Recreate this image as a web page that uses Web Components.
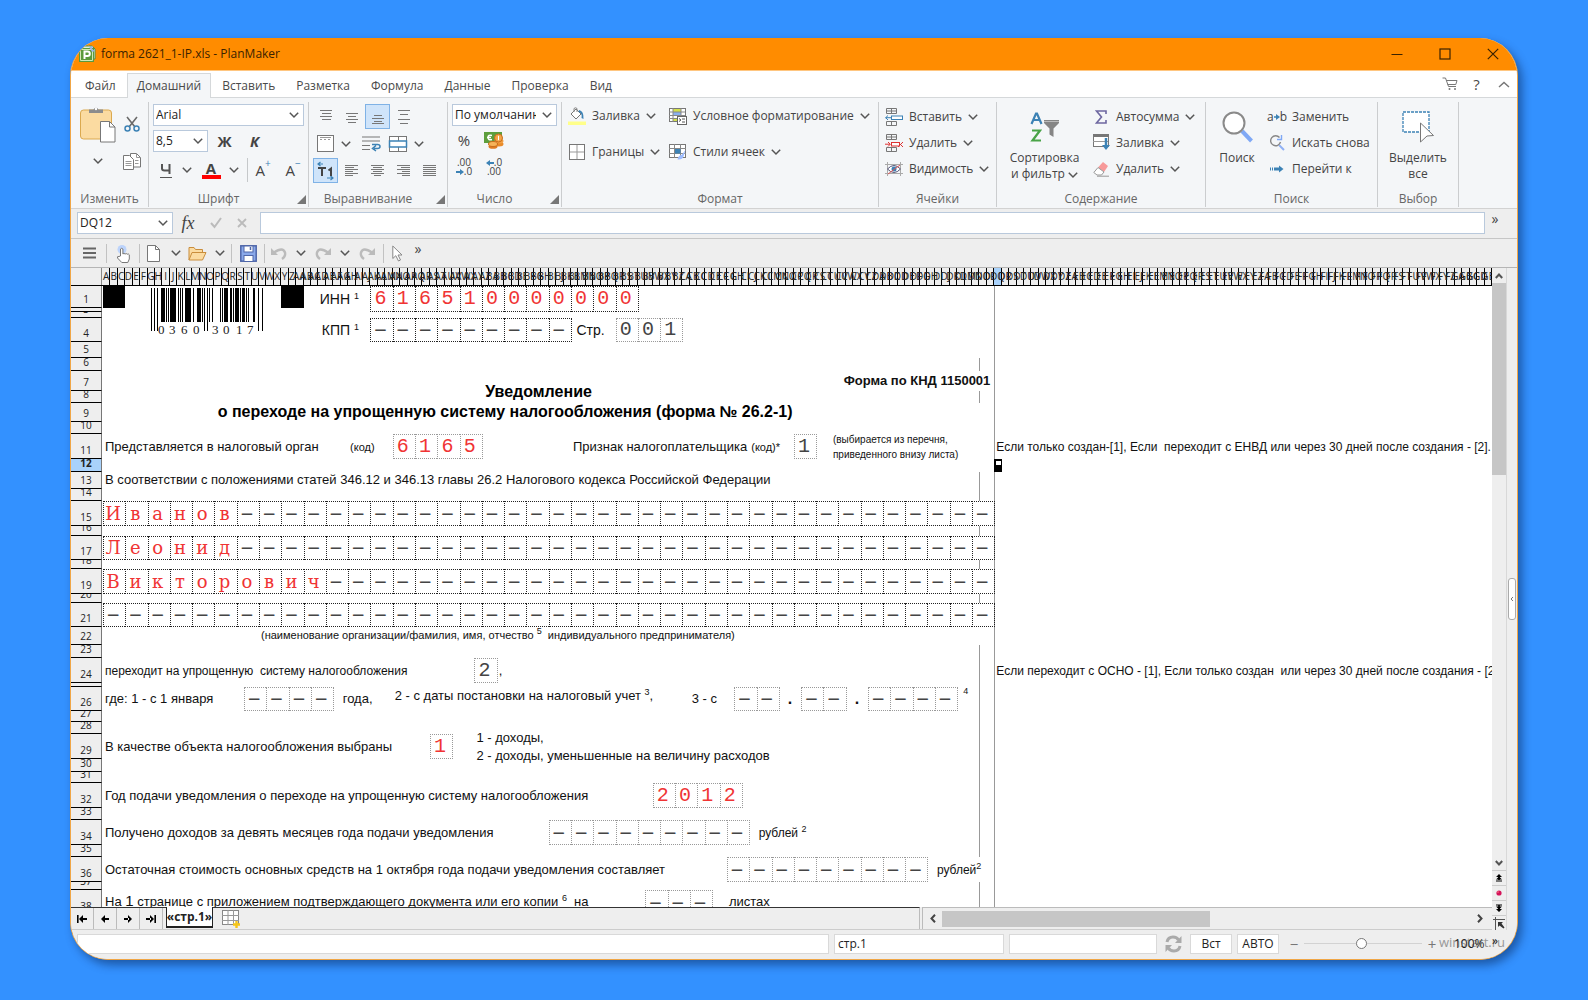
<!DOCTYPE html>
<html lang="ru">
<head>
<meta charset="utf-8">
<title>forma 2621_1-IP.xls - PlanMaker</title>
<style>
  html, body { margin: 0; height: 100%; }
  *, *::before { box-sizing: border-box; }
  body { background: #3391ff; font: 12px/16px "Open Sans", "Noto Sans", sans-serif; color: #444; padding: 38px 70px 40px; overflow: hidden; }
</style>
</head>
<body>
<app-window>
  <title-bar>forma 2621_1-IP.xls - PlanMaker</title-bar>
  <menu-tabs></menu-tabs>
  <ribbon-bar></ribbon-bar>
  <formula-bar></formula-bar>
  <quick-bar></quick-bar>
  <sheet-area></sheet-area>
  <status-bar></status-bar>
</app-window>
<script>
const BASE = `
  *{box-sizing:border-box}
  :host{display:block}
  button,select,input{font:inherit;color:inherit;margin:0;border-radius:0}
  button{border:0;background:none;padding:0;display:flex;align-items:center;justify-content:center;white-space:nowrap}
`;
function define(tag, css, html) {
  customElements.define(tag, class extends HTMLElement {
    constructor() {
      super();
      this.attachShadow({ mode: 'open' });
    }
    connectedCallback() {
      const body = typeof html === 'function' ? html(this) : html;
      this.shadowRoot.innerHTML = `<style>${BASE}${css}</style>${body}`;
    }
  });
}

/* ---------- icons: [width, height, markup] ---------- */
const hl = (list, c = '#777') => list.map(([x, y, w]) => `<path d="M${x} ${y}.5h${w}" stroke="${c}"/>`).join('');
const ICONS = {
  chev: [10, 6, '<path d="M.8 .8L5 5 9.200.8" fill="none" stroke="#555" stroke-width="1.500"/>'],
  app: [17, 18, '<path d="M3 1h10l3 3v10H3z" fill="#dfeee0" stroke="#4b8f4b"/><rect x="0" y="3" width="15" height="14" fill="#5a9a3c"/><path d="M1.500 4.500h12v11h-12z" fill="none" stroke="#cfe8b8"/><path d="M5.500 14V6.500h3a2.300 2.300 0 010 4.600h-3" fill="none" stroke="#fff" stroke-width="2"/><path d="M9 0l2 2 3-1-1 3 3 2-3 1" fill="#9db4e6"/>'],
  min: [12, 12, '<path d="M.5 6.500h11" stroke="#3a2200" stroke-width="1.200"/>'],
  max: [12, 12, '<rect x="1" y="1" width="10" height="10" fill="none" stroke="#3a2200" stroke-width="1.200"/>'],
  close: [12, 12, '<path d="M.8.8l10.400 10.400M11.200.8L.8 11.200" stroke="#3a2200" stroke-width="1.200"/>'],
  cart: [16, 14, '<path d="M.5 1h3l3 8.500h7.500M4.200 3.500h10.800l-1.200 4H5.600" fill="none" stroke="#777"/><circle cx="7.500" cy="12" r="1" fill="#777"/><circle cx="13" cy="12" r="1" fill="#777"/>'],
  up: [12, 7, '<path d="M1 6l5-4.600L11 6" fill="none" stroke="#777" stroke-width="1.400"/>'],
  paste: [36, 38, '<rect x=".5" y="5" width="31" height="29" rx="3" fill="#fbdba1" stroke="#dba94f"/><path d="M9 8V4.500h4.500a2.700 2.700 0 015 0H23V8z" fill="#8c8c8c"/><circle cx="16" cy="4" r="1.200" fill="#fff"/><path d="M20.500 16.500h9l5.500 5.500v15H20.500z" fill="#fff" stroke="#777"/><path d="M29.500 16.500V22H35" fill="none" stroke="#777"/>'],
  cut: [16, 16, '<path d="M3 1l8 10M13 1L5 11" stroke="#6a6a6a" stroke-width="1.600"/><circle cx="3.500" cy="12.500" r="2.500" fill="none" stroke="#3c82b5" stroke-width="1.500"/><circle cx="12.500" cy="12.500" r="2.500" fill="none" stroke="#3c82b5" stroke-width="1.500"/>'],
  copy: [18, 17, '<path d="M7.500.5h6l4 4v9.500h-10z" fill="#fff" stroke="#777"/><path d="M.5 2.500h6l4 4v10H.5z" fill="#fff" stroke="#777"/><path d="M2.500 8.500h6m-6 2h6m-6 2h6M13.500 1v3.500h3.500m-5 3h3.500m-3.500 3h3.500" stroke="#999" fill="none"/>'],
  under: [14, 17, '<path d="M3 2v4.500q0 2 2.500 2H10M10.500 2v10" fill="none" stroke="#555" stroke-width="2"/><path d="M1 15.500h12" stroke="#555"/>'],
  vtop: [14, 14, hl([[1, 0, 12], [3, 3, 9], [1, 6, 12], [3, 9, 9]])],
  vmid: [14, 14, hl([[1, 3, 12], [3, 6, 8], [1, 9, 12], [3, 12, 8]])],
  vbot: [14, 14, hl([[3, 5, 8], [1, 8, 12], [3, 11, 8], [1, 13, 12]])],
  vjust: [14, 14, hl([[1, 0, 12], [3, 4, 8], [1, 9, 12], [3, 13, 8]])],
  frame: [17, 17, '<rect x=".5" y=".5" width="16" height="16" fill="#fff" stroke="#777"/><path d="M3 2.500h11M3 4.500h2m2 0h2m2 0h2" stroke="#999"/>'],
  wrap: [19, 15, '<path d="M0 1h18M0 5h18M0 9.500h8M0 13.500h8" stroke="#777" stroke-width="1.200"/><path d="M12 12.500h3.500q2.500 0 2.500-2t-2.500-2H10M14 9.500l-3.500 3 3.500 2.500" fill="none" stroke="#3c82b5" stroke-width="1.500"/>'],
  merge: [18, 16, '<rect x=".5" y=".5" width="17" height="15" fill="#fff" stroke="#777"/><path d="M9.500 0v16" stroke="#777"/><rect x=".5" y="5" width="17" height="6" fill="#fff" stroke="#3c82b5" stroke-width="1.500"/>'],
  hleft: [14, 13, hl([[0, 1, 13], [0, 3, 9], [0, 5, 13], [0, 7, 8], [0, 9, 13], [0, 11, 8]])],
  hcent: [14, 13, hl([[0, 1, 13], [2, 3, 9], [0, 5, 13], [2, 7, 9], [0, 9, 13], [3, 11, 7]])],
  hright: [14, 13, hl([[0, 1, 13], [4, 3, 9], [0, 5, 13], [5, 7, 8], [0, 9, 13], [5, 11, 8]])],
  hjust: [14, 13, hl([[0, 1, 13], [0, 3, 13], [0, 5, 13], [0, 7, 13], [0, 9, 13], [0, 11, 13]])],
  t1: [18, 18, '<path d="M6 2H1M3.500 0L1 2l2.500 2M10 16h6M13.500 14l2.500 2-2.500 2" fill="none" stroke="#3c82b5" stroke-width="1.200"/><path d="M1 6h8M5 6v8M11.500 8.500L14 6.500V14" fill="none" stroke="#444" stroke-width="2"/>'],
  money: [20, 17, '<rect x="0" y="0" width="18" height="11" fill="#5d9e3d"/><path d="M8 3.500q-4-1-4 2t4 2M3 5.500h4" fill="none" stroke="#fff" stroke-width="1.400"/><ellipse cx="15" cy="12" rx="4.500" ry="2.500" fill="#e98b2a"/><ellipse cx="15" cy="9" rx="4.500" ry="2.500" fill="#f2a043"/><circle cx="14.500" cy="6" r="4" fill="#f4a548" stroke="#c96d1c"/><ellipse cx="9" cy="14.500" rx="4.500" ry="2.300" fill="#e07c22"/><ellipse cx="9" cy="12" rx="4.500" ry="2.500" fill="#f6b35a" stroke="#c96d1c"/><path d="M14.500 3.800v4.400" stroke="#fff"/>'],
  fill: [18, 18, '<path d="M3 7l5-5 5 5-5 5z" fill="#fff" stroke="#777"/><path d="M6 5V1.500q1.500-1.500 3 0V5" fill="none" stroke="#888"/><path d="M11 3q5 1 4.500 9l-2-1q1-5-3-6z" fill="#3c82b5"/><rect y="14.500" width="18" height="3.500" fill="#ffff8a"/>'],
  grid: [16, 16, '<rect x=".5" y=".5" width="15" height="15" fill="#fff" stroke="#777"/><path d="M8 1v14M1 8h14" stroke="#999"/>'],
  cond: [18, 17, '<rect x=".5" y=".5" width="16" height="13" fill="#fff" stroke="#777"/><rect x="4" y="1" width="8" height="3" fill="#d3e04b"/><rect x="4" y="4" width="8" height="3" fill="#8bb0f0"/><rect x="4" y="10" width="6" height="3" fill="#d3e04b"/><path d="M4 0v14M12 0v14M0 4h16M0 7.500h16M0 10.500h16" stroke="#888"/><rect x="8.500" y="8.500" width="9" height="8" fill="#fff" stroke="#666"/><path d="M10 10.500l2 1.500-2 1.500M13 11h3m-3 3h3" fill="none" stroke="#555"/>'],
  styles: [18, 16, '<rect x=".5" y=".5" width="16" height="13" fill="#fff" stroke="#777"/><path d="M5.500 0v14M11.500 0v14M0 4.500h17M0 9.500h17" stroke="#888"/><rect x="6" y="5" width="5.500" height="4.500" fill="#3c82b5"/><path d="M16.500 6l-4 5q-3 0-4 4.500 5 .5 6-3z" fill="#9dbcff"/>'],
  ins: [18, 18, '<path d="M1.500.5h10v5h-10zM1.500 3h10M6.500 0v6M1.500 13.500h10v4h-10zM6.500 13v4" fill="none" stroke="#777"/><rect x="6.500" y="8" width="11" height="3.500" fill="#fff" stroke="#3c82b5"/><path d="M6 9.700H.5M3 7.500L.7 9.700 3 12" fill="none" stroke="#3c82b5"/>'],
  del: [19, 18, '<path d="M1.500.5h10v5h-10zM1.500 3h10M6.500 0v6M1.500 13.500h10v4h-10zM6.500 13v4" fill="none" stroke="#777"/><rect x="6.500" y="8.500" width="8" height="3.500" fill="#fff" stroke="#d33"/><path d="M0 10.200h5M3 8l2.300 2.200L3 12.500M13 8l5 5m0-5l-5 5" fill="none" stroke="#d33"/>'],
  eye: [18, 14, '<path d="M2.500 0v14M15.500 0v14M0 2.500h18M0 11.500h18" stroke="#aaa"/><path d="M2.500 7q6.500-7 13 0-6.500 7-13 0z" fill="#fff" stroke="#557"/><circle cx="9" cy="7" r="2.500" fill="#3c82b5"/><path d="M3 12L15 3" stroke="#d55"/>'],
  funnel: [30, 30, '<path d="M1.500 12L6 1.500h1L11.500 12M3 8h7" fill="none" stroke="#3c82b5" stroke-width="2.200"/><path d="M2 18.500h8L2.500 28.500H11" fill="none" stroke="#49a347" stroke-width="2.200"/><path d="M14 8h15v3l-5.500 5.500V25l-4-2.500v-6L14 11z" fill="#858585"/><path d="M14 9.500h15" stroke="#bbb"/>'],
  sum: [12, 14, '<path d="M11 4V1H1.500l5 6-5 6H11v-3" fill="none" stroke="#6d67a0" stroke-width="1.600"/>'],
  filld: [17, 17, '<rect x=".5" y=".5" width="15" height="12" fill="#fff" stroke="#777"/><path d="M0 2h16" stroke="#777" stroke-width="2"/><path d="M0 7.500h15" stroke="#999"/><path d="M13 4v8" stroke="#3c82b5" stroke-width="2.500"/><path d="M9 11h8l-4 5z" fill="#3c82b5"/>'],
  erase: [16, 16, '<path d="M10 1l5 4-4 6-6-4.500z" fill="#f79a9a"/><path d="M5 6.500l6 4.500-2.500 3H4L.8 11.500z" fill="#fff" stroke="#999"/><path d="M4 15.200h12" stroke="#999"/>'],
  search: [31, 33, '<path d="M20 20l9.500 10" stroke="#7fa8f5" stroke-width="4"/><circle cx="12" cy="12" r="10.500" fill="#fff" stroke="#8a8a8a" stroke-width="2"/>'],
  again: [16, 16, '<path d="M10 10l5 5" stroke="#8fb0f5" stroke-width="2"/><path d="M11.500 7a5 5 0 11-1-4.500" fill="none" stroke="#888" stroke-width="1.400"/><path d="M8 4.500h4.500V0" fill="none" stroke="#7fa8f5" stroke-width="1.400"/>'],
  goto: [14, 8, '<path d="M.5 2.500v3M2.500 2.500v3" stroke="#3c82b5"/><path d="M4 4h6" stroke="#3c82b5" stroke-width="3"/><path d="M9 .5L13.500 4 9 7.500z" fill="#3c82b5"/>'],
  repl: [6, 8, '<path d="M0 4h4" stroke="#3c82b5" stroke-width="1.500"/><path d="M2 1l4 3-4 3z" fill="#3c82b5"/>'],
  pick: [32, 32, '<rect x="1" y="1" width="26" height="20" fill="#fff" stroke="#3c82b5" stroke-dasharray="3 1" stroke-width="1.300"/><path d="M18.500 12l13 12.500-6.500.5-6.500 6z" fill="#fff" stroke="#777"/>'],
  right: [8, 6, '<path d="M0 3h5" stroke="#3c82b5" stroke-width="2"/><path d="M4 0l4 3-4 3z" fill="#3c82b5"/>'],
  left: [8, 6, '<path d="M3 3h5" stroke="#3c82b5" stroke-width="2"/><path d="M4 0L0 3l4 3z" fill="#3c82b5"/>'],
  corner: [9, 9, '<path d="M9 0v9H0z" fill="#777"/>'],
  check: [12, 11, '<path d="M1 6l3.500 4L11 1" fill="none" stroke="#bbb" stroke-width="2"/>'],
  cross: [10, 10, '<path d="M1 1l8 8M9 1L1 9" stroke="#bbb" stroke-width="1.800"/>'],
  burger: [14, 12, '<path d="M0 1.500h13M0 6h13M0 10.500h13" stroke="#666" stroke-width="2"/>'],
  hand: [16, 19, '<circle cx="7" cy="5.500" r="4.500" fill="#bcd3fb"/><path d="M5.500 12V5q1.200-1.400 2.400 0v5q1-1.200 2.200 0 1.200-1 2.200.2 1.400-.6 2 .6v4.200l-1.500 3.500h-6L2.500 14q-.5-2 1.500-1.500z" fill="#fff" stroke="#777"/>'],
  page: [13, 17, '<path d="M.5.5h8l4 4v12H.5z" fill="#fff" stroke="#777"/><path d="M8.500.5v4h4" fill="none" stroke="#777"/>'],
  folder: [19, 15, '<path d="M1 14V1.500h5l1.500 2h7V6" fill="#fbdba1" stroke="#c98d3c"/><path d="M4 6.500h14L14.500 14H1z" fill="#fbdba1" stroke="#c98d3c"/>'],
  save: [17, 17, '<rect x=".8" y=".8" width="15.400" height="15.400" fill="#8aa9ea" stroke="#4f66a8" stroke-width="1.500"/><rect x="4" y="1" width="9" height="6" fill="#fff" stroke="#4f66a8"/><rect x="4" y="10.500" width="9" height="6" fill="#fff" stroke="#4f66a8"/><path d="M10.500 2v3" stroke="#4f66a8" stroke-width="1.500"/>'],
  undo: [16, 13, '<path d="M3 5.500q9-6 11 0 .8 4-3 6.500" fill="none" stroke="#bbb" stroke-width="2.400"/><path d="M0 1v7h7z" fill="#bbb"/>'],
  redo: [16, 13, '<path d="M13 5.500q-9-6-11 0-.8 4 3 6.500" fill="none" stroke="#bbb" stroke-width="2.400"/><path d="M16 1v7H9z" fill="#bbb"/>'],
  arrow: [11, 17, '<path d="M.8 1v12.500l3-2.800L6.500 16l2-1-2.500-5h4z" fill="#fff" stroke="#888"/>'],
  vup: [8, 6, '<path d="M.8 5L4 1.500 7.200 5" fill="none" stroke="#555" stroke-width="2"/>'],
  vdn: [8, 6, '<path d="M.8 1L4 4.500 7.200 1" fill="none" stroke="#555" stroke-width="2"/>'],
  vlt: [6, 9, '<path d="M5 .8L1.500 4.500 5 8.200" fill="none" stroke="#444" stroke-width="2"/>'],
  vrt: [6, 9, '<path d="M1 .8L4.500 4.500 1 8.200" fill="none" stroke="#444" stroke-width="2"/>'],
  side: [4, 6, '<path d="M3 1L1 3l2 2" fill="none" stroke="#777"/>'],
  dup: [6, 8, '<path d="M3 0l3 3H0zM0 6.500h6v1H0zM2.200 2h1.600v4H2.200z"/><path d="M3 2.500l3 3H0z"/>'],
  ddn: [6, 8, '<path d="M3 8L0 5h6zM0 .5h6v1H0zM2.200 1h1.600v5H2.200z"/><path d="M3 5.500l-3-3h6z"/>'],
  dot: [6, 6, '<circle cx="3" cy="3" r="2.600" fill="#d4145a"/><circle cx="2" cy="2" r="1" fill="#e57"/>'],
  cornr: [13, 13, '<path d="M2.500 0v13M0 2.500h12" stroke="#555"/><path d="M5 5h5L8.500 6.500l3 4-1 1-4-3L5 10z" fill="#333"/>'],
  nfirst: [10, 8, '<path d="M.8 0v8" stroke="#000" stroke-width="1.600"/><path d="M2 4l4-4v8zM5 3h5v2H5z"/>'],
  nprev: [8, 8, '<path d="M0 4l4-4v8zM3 3h5v2H3z"/>'],
  nnext: [8, 8, '<path d="M8 4L4 0v8zM0 3h5v2H0z"/>'],
  nlast: [10, 8, '<path d="M9.200 0v8" stroke="#000" stroke-width="1.600"/><path d="M8 4L4 0v8zM0 3h5v2H0z"/>'],
  newsh: [18, 18, '<rect x=".5" y=".5" width="16" height="14" fill="#fff" stroke="#888"/><path d="M6 0v15M11.500 0v15M0 5.500h17M0 10.500h17" stroke="#999"/><path d="M14.500 11v7M11 14.500h7" stroke="#f5c518" stroke-width="2.400"/>'],
  sync: [17, 18, '<path d="M2 7q1-5 6-5 4 0 5.500 3M15 11q-1 5-6 5-4 0-5.500-3" fill="none" stroke="#aaa" stroke-width="3"/><path d="M16.500 1v7H10zM.5 17v-7H7z" fill="#aaa"/>'],
  barcode: [114, 44, (() => {
    const inner = [[10, 4], [15, 1], [17, 1], [19, 6], [27, 1], [29, 1], [31, 1], [34, 6], [42, 1], [46, 4], [51, 1], [58, 1], [61, 1], [69, 1], [71, 1], [73, 4], [79, 2], [82, 1], [84, 4], [89, 1], [91, 3], [95, 1], [97, 1], [102, 2]];
    const guard = [[0, 1], [3, 1], [6, 1], [53, 1], [56, 1], [107, 1], [111, 1]];
    return inner.map(([x, w]) => `<rect x="${x}" y="0" width="${w}" height="34"/>`).join('') +
      guard.map(([x, w]) => `<rect x="${x}" y="0" width="${w}" height="43"/>`).join('') +
      '<text x="7 18 30 42 61 72 85 96" y="46" font-family="Liberation Serif, serif" font-size="13" fill="#222">03603017</text>';
  })()],
};
define('ui-icon', ':host{display:inline-flex;flex:none}svg{display:block;overflow:visible}', el => {
  const [w, h, m] = ICONS[el.getAttribute('name')];
  return `<svg width="${w}" height="${h}" viewBox="0 0 ${w} ${h}" aria-hidden="true">${m}</svg>`;
});
const ic = n => `<ui-icon name="${n}"></ui-icon>`;

/* ---------- window frame ---------- */
define('app-window', `
  :host{display:flex;flex-direction:column;height:100%;background:#eee;border:1px solid #f0a646;border-top:0;border-radius:38px;overflow:hidden;box-shadow:4px 5px 10px rgba(0,20,60,.45);position:relative}
  ::slotted(sheet-area){flex:1;min-height:0}
`, '<slot></slot>');

define('title-bar', `
  :host{display:flex;align-items:center;height:33px;flex:none;background:#ff8c00;border-bottom:1px solid #ffc680;color:#3a2200;padding-left:8px}
  .t{flex:1;padding-left:5px} button{width:48px;height:32px}
`, `${ic('app')}<span class="t"><slot></slot></span>
  <button aria-label="Свернуть">${ic('min')}</button><button aria-label="Развернуть">${ic('max')}</button><button aria-label="Закрыть">${ic('close')}</button>`);

define('menu-tabs', `
  :host{display:flex;height:27px;flex:none;background:#fff;border-bottom:1px solid #d5d8da;padding-left:4px;color:#4a4a4a}
  nav{display:flex;flex:1;padding-top:2px;gap:1px}
  nav button{padding:0 10px;height:25px}
  nav button.on{background:#f4f6f8;border:1px solid #d5d8da;border-bottom:0;padding:0 9px}
  .r{display:flex;align-items:center} .r button{width:27px;height:26px;font-size:15px}
`, `<nav>${['Файл', 'Домашний', 'Вставить', 'Разметка', 'Формула', 'Данные', 'Проверка', 'Вид'].map(t => `<button${t === 'Домашний' ? ' class="on"' : ''}>${t}</button>`).join('')}</nav>
  <div class="r"><button aria-label="Магазин">${ic('cart')}</button><button aria-label="Справка">?</button><button aria-label="Свернуть ленту">${ic('up')}</button></div>`);

/* ---------- ribbon parts ---------- */
define('ribbon-group', `
  :host{display:flex;flex-direction:column;border-right:1px solid #cbcdcf;margin:4px 0 1px;flex:none}
  .c{flex:1;padding:2px 4px 0 4px}
  footer{display:grid;height:16px;align-items:center;justify-items:center;color:#666}
  footer>*{grid-area:1/1} footer.x span{padding-right:20px}
  ui-icon{justify-self:end;padding-right:2px;align-self:end;padding-bottom:3px}
`, el => {
  const x = el.hasAttribute('launcher');
  return `<div class="c"><slot></slot></div><footer${x ? ' class="x"' : ''}><span>${el.getAttribute('label')}</span>${x ? ic('corner') : ''}</footer>`;
});

define('drop-button', `
  :host{display:flex}
  button{height:100%} .i{width:22px;display:flex;align-items:center;justify-content:center;margin-right:4px;color:#444}
  .v{margin-left:6px;display:flex} .v:empty{display:none}
`, el => `<button><span class="i">${el.getAttribute('icon') === 'repl' ? '<span>a</span>' + ic('repl') + '<span>b</span>' : ic(el.getAttribute('icon'))}</span><slot></slot><span class="v">${el.hasAttribute('plain') ? '' : ic('chev')}</span></button>`);

define('big-button', `
  button{flex-direction:column;width:100%;justify-content:flex-start;line-height:16px}
  .i{height:46px;display:flex;align-items:center} .l{text-align:center;white-space:pre-line}
`, el => `<button><span class="i">${ic(el.getAttribute('icon'))}</span><span class="l"><slot></slot></span></button>`);

define('combo-box', `
  :host{display:grid;background:#fff;border:1px solid #b9c9dc;align-items:center;color:#222}
  select{grid-area:1/1;appearance:none;border:0;background:none;width:100%;height:100%;padding:0 20px 0 2px;outline:0;text-overflow:clip;overflow:hidden}
  ui-icon{grid-area:1/1;justify-self:end;padding-right:4px;pointer-events:none}
`, el => `<select aria-label="${el.getAttribute('label')}"><option>${el.getAttribute('value')}</option></select>${ic('chev')}`);

define('ribbon-bar', `
  :host{display:flex;height:111px;flex:none;background:#f4f6f8;border-bottom:1px solid #d2d2d2}
  .edit{display:grid;grid-template-columns:46px 22px;grid-template-rows:40px 34px;align-items:center;justify-items:center}
  .font{display:grid;grid-template-rows:22px 22px 28px;gap:4px}
  .row{display:grid;align-items:stretch}
  .f2{grid-template-columns:55px 33px 27px}
  .f3{grid-template-columns:26px 16px 32px 14px 12px 20px 30px}
  .f3 i{width:1px;background:#c5c8ca;justify-self:center;margin:2px 0}
  .f3 button:last-child{justify-self:end;width:20px}
  b{font-size:15px} .it{font-style:italic}
  .color{flex-direction:column} .color b{line-height:14px} .color i{display:block;width:19px;height:4px;margin:0;background:#f00}
  sup{font-size:10px;line-height:8px;color:#3c82b5;align-self:flex-start;padding-top:3px} .sz{font-size:15px}
  .al{display:grid;grid-template-rows:25px 25px 25px;row-gap:2px}
  .a5{grid-template-columns:repeat(5,25px);column-gap:1px}
  .am{grid-template-columns:25px 16px 34px 20px 22px}
  .on{background:#cfe4fa;border:1px solid #7fb2e6}
  .num{display:grid;grid-template-rows:22px 24px 25px;row-gap:2px}
  .n2{grid-template-columns:24px 36px}
  .dec{flex-direction:column;font-size:10px;line-height:9px;align-items:center}
  .fmt{display:grid;grid-template-columns:101px auto;grid-auto-rows:24px;row-gap:12px;justify-content:start}
  .list{display:grid;grid-auto-rows:25px;row-gap:1px}
  .two{display:flex;gap:2px}
`, `
  <ribbon-group label="Изменить" style="width:78px"><div class="edit"><button aria-label="Вставить">${ic('paste')}</button><button aria-label="Вырезать">${ic('cut')}</button><button aria-label="Параметры вставки">${ic('chev')}</button><button aria-label="Копировать">${ic('copy')}</button></div></ribbon-group>
  <ribbon-group label="Шрифт" launcher style="width:160px"><div class="font">
    <combo-box label="Шрифт" value="Arial"></combo-box>
    <div class="row f2"><combo-box label="Размер" value="8,5"></combo-box><button><b>Ж</b></button><button><b class="it">К</b></button></div>
    <div class="row f3"><button aria-label="Подчёркнутый">${ic('under')}</button><button aria-label="Вид линии">${ic('chev')}</button><button class="color" aria-label="Цвет"><b>А</b><i></i></button><button aria-label="Выбор цвета">${ic('chev')}</button><i></i><button class="sz"><span>A</span><sup>+</sup></button><button class="sz"><span>A</span><sup>−</sup></button></div>
  </div></ribbon-group>
  <ribbon-group label="Выравнивание" launcher style="width:139px"><div class="al">
    <div class="row a5"><button aria-label="По верху">${ic('vtop')}</button><button aria-label="По середине">${ic('vmid')}</button><button class="on" aria-label="По низу">${ic('vbot')}</button><button aria-label="Распределить">${ic('vjust')}</button></div>
    <div class="row am"><button aria-label="Рамка">${ic('frame')}</button><button aria-label="Ещё">${ic('chev')}</button><button aria-label="Перенос">${ic('wrap')}</button><button aria-label="Объединить">${ic('merge')}</button><button aria-label="Ещё">${ic('chev')}</button></div>
    <div class="row a5"><button class="on" aria-label="Общее">${ic('t1')}</button><button aria-label="Влево">${ic('hleft')}</button><button aria-label="По центру">${ic('hcent')}</button><button aria-label="Вправо">${ic('hright')}</button><button aria-label="По ширине">${ic('hjust')}</button></div>
  </div></ribbon-group>
  <ribbon-group label="Число" launcher style="width:114px"><div class="num">
    <combo-box label="Формат числа" value="По умолчанию"></combo-box>
    <div class="row n2"><button style="font-size:15px">%</button><button aria-label="Валюта">${ic('money')}</button></div>
    <div class="row n2"><button class="dec"><span>.00</span><span>${ic('right')}.0</span></button><button class="dec"><span>${ic('left')}.0</span><span>.00</span></button></div>
  </div></ribbon-group>
  <ribbon-group label="Формат" style="width:317px"><div class="fmt">
    <drop-button icon="fill">Заливка</drop-button><drop-button icon="cond">Условное форматирование</drop-button>
    <drop-button icon="grid">Границы</drop-button><drop-button icon="styles">Стили ячеек</drop-button></div></ribbon-group>
  <ribbon-group label="Ячейки" style="width:118px"><div class="list"><drop-button icon="ins">Вставить</drop-button><drop-button icon="del">Удалить</drop-button><drop-button icon="eye">Видимость</drop-button></div></ribbon-group>
  <ribbon-group label="Содержание" style="width:209px"><div class="two"><big-button icon="funnel" style="width:87px">Сортировка<br>и фильтр ${ic('chev')}</big-button>
    <div class="list"><drop-button icon="sum">Автосумма</drop-button><drop-button icon="filld">Заливка</drop-button><drop-button icon="erase">Удалить</drop-button></div></div></ribbon-group>
  <ribbon-group label="Поиск" style="width:172px"><div class="two"><big-button icon="search" style="width:54px">Поиск</big-button>
    <div class="list"><drop-button plain icon="repl">Заменить</drop-button><drop-button plain icon="again">Искать снова</drop-button><drop-button plain icon="goto">Перейти к</drop-button></div></div></ribbon-group>
  <ribbon-group label="Выбор" style="width:81px"><big-button icon="pick">Выделить<br>все</big-button></ribbon-group>`);

define('formula-bar', `
  :host{display:flex;align-items:center;height:30px;flex:none;background:#eee;border-bottom:1px solid #c6c6c6;padding:0 0 2px 6px}
  combo-box{width:96px;height:22px}
  .fx{width:30px;font:italic 18px/20px "Liberation Serif",serif} .k{width:26px;height:22px}
  input{flex:1;height:22px;border:1px solid #b9c9dc;background:#fff;margin-left:5px;outline:0;min-width:0}
  .m{width:32px;padding-right:12px;padding-bottom:8px;font-size:14px}
`, `<combo-box label="Имя ячейки" value="DQ12"></combo-box><button class="fx">fx</button><button class="k" aria-label="Ввод">${ic('check')}</button><button class="k" aria-label="Отмена">${ic('cross')}</button><input aria-label="Строка формул"><button class="m">»</button>`);

define('quick-bar', `
  :host{display:flex;align-items:center;height:29px;flex:none;background:#eee;border-bottom:1px solid #b5b5b5;padding-left:3px}
  i{width:1px;height:19px;background:#c2c2c2} .c+i,.n+i{margin-left:3px}
  button{height:24px;width:32px} .c{width:17px} .n{width:27px} .m{width:14px;padding-bottom:8px;font-size:14px}
`, `<button aria-label="Меню">${ic('burger')}</button><i></i><button aria-label="Сенсорный режим">${ic('hand')}</button><i></i>
  <button class="n" aria-label="Создать">${ic('page')}</button><button class="c" aria-label="Ещё">${ic('chev')}</button><button class="n" aria-label="Открыть">${ic('folder')}</button><button class="c" aria-label="Ещё">${ic('chev')}</button><i></i>
  <button aria-label="Сохранить">${ic('save')}</button><i></i><button class="n" aria-label="Отменить">${ic('undo')}</button><button class="c" aria-label="Ещё">${ic('chev')}</button><button class="n" aria-label="Вернуть">${ic('redo')}</button><button class="c" aria-label="Ещё">${ic('chev')}</button><button class="n" aria-label="Повторить">${ic('redo')}</button><i></i>
  <button class="n" aria-label="Указатель">${ic('arrow')}</button><button class="m">»</button>`);

/* ---------- worksheet ---------- */
const COLS = 187;
const HEIGHTS = [22, 4, 6, 24, 16, 13, 20, 12, 19, 12, 25, 13, 17, 12, 25, 10, 24, 9, 25, 9, 24, 18, 13, 25, 4, 24, 11, 12, 25, 13, 11, 25, 12, 25, 12, 25, 8, 25];
const MARGIN_ROWS = [6, 8, 13, 14, 16, 18, 20, 23, 24, 25, 26, 27, 28, 29, 30, 31, 32, 33, 34, 35, 37, 38];
const colName = n => n < 26 ? String.fromCharCode(65 + n) : colName(Math.floor(n / 26) - 1) + String.fromCharCode(65 + n % 26);
const T = (c, span, html, cls = '') => `<td class="${cls}" style="grid-column:${c + 2}/span ${span}"><span>${html}</span></td>`;
const B = (c, str, cls = '') => [...str].map((ch, i, a) =>
  `<td class="b ${cls} ${i === a.length - 1 ? 'last' : ''} ${ch === '–' ? 'dash' : ''}" style="grid-column:${c + 2 + i * 3}/span 3">${ch}</td>`).join('');
const name = s => B(0, s, 'nm red') + B(s.length * 3, '–'.repeat(40 - s.length));
const CELLS = {
  1: '<td class="blk" style="grid-column:2/span 3"></td><td class="over" style="grid-column:8/span 16">' + ic('barcode') + '</td><td class="blk" style="grid-column:26/span 3"></td>' +
    T(26, 9, 'ИНН <sup>1</sup>', 'big end tall') + B(36, '616510000000', 'red tall'),
  4: T(26, 9, 'КПП <sup>1</sup>', 'big end') + B(36, '–––––––––') + T(63, 5, 'Стр.', 'big mid') + B(69, '001', 'soft'),
  7: T(98, 22, 'Форма по КНД 1150001', 'bold end'),
  8: T(0, 117, 'Уведомление', 'title low'),
  9: T(0, 108, 'о переходе на упрощенную систему налогообложения (форма № 26.2-1)', 'title up'),
  11: T(0, 30, 'Представляется в налоговый орган') + T(33, 6, '(код)', 'sm') + B(39, '6165', 'red soft') + T(63, 24, 'Признак налогоплательщика') + T(87, 6, '(код)*', 'sm') + B(93, '1', 'soft') +
    T(98, 22, '(выбирается из перечня,<br>приведенного внизу листа)', 'xs') + T(120, 67, 'Если только создан-[1], Если&nbsp; переходит с ЕНВД или через 30 дней после создания - [2].', 'note'),
  12: '<td class="cur" style="grid-column:122/span 1"><i></i></td>',
  13: T(0, 90, 'В соответствии с положениями статей 346.12 и 346.13 главы 26.2 Налогового кодекса Российской Федерации', 'up'),
  15: name('Иванов'), 17: name('Леонид'), 19: name('Викторович'), 21: B(0, '–'.repeat(40)),
  22: T(21, 70, '(наименование организации/фамилия, имя, отчество <sup>5</sup>&nbsp; индивидуального предпринимателя)', 'sm up'),
  24: T(0, 45, 'переходит на упрощенную&nbsp; систему налогообложения', 'note') + B(50, '2', 'soft') + T(53, 2, ',') + T(120, 67, 'Если переходит с ОСНО - [1], Если только создан&nbsp; или через 30 дней после создания - [2].', 'note'),
  26: T(0, 18, 'где: 1 - с 1 января') + B(19, '––––', 'soft') + T(32, 7, 'года,') + T(39, 38, '2 - с даты постановки на налоговый учет <sup>3</sup>,', 'rise') + T(79, 5, '3 - с') +
    B(85, '––', 'soft') + T(91, 3, '.', 'pt') + B(94, '––', 'soft') + T(100, 3, '.', 'pt') + B(103, '––––', 'soft') + T(115, 3, '4', 'top'),
  29: T(0, 42, 'В качестве объекта налогообложения выбраны') + B(44, '1', 'red soft') + T(50, 60, '1 - доходы,<br>2 - доходы, уменьшенные на величину расходов', 'two'),
  32: T(0, 70, 'Год подачи уведомления о переходе на упрощенную систему налогообложения') + B(74, '2012', 'red soft'),
  34: T(0, 58, 'Получено доходов за девять месяцев года подачи уведомления') + B(60, '–––––––––', 'soft') + T(88, 10, 'рублей <sup>2</sup>', 'note'),
  36: T(0, 80, 'Остаточная стоимость основных средств на 1 октября года подачи уведомления составляет') + B(84, '–––––––––', 'soft') + T(112, 8, 'рублей<sup>2</sup>', 'note'),
  38: T(0, 70, 'На <big>1</big> странице с приложением подтверждающего документа или его копии <sup>6</sup>&nbsp; на', 'up') + B(73, '–––', 'soft') + T(84, 10, 'листах', 'up'),
};
define('sheet-grid', `
  :host{display:block;overflow:hidden;background:#fff;font:13px/14px "Liberation Sans",Arial,sans-serif;color:#111}
  table,tbody,thead{display:block}
  tr{display:grid;grid-template-columns:32px repeat(${COLS},minmax(0,1fr));grid-template-rows:100%;height:var(--h)}
  th,td{padding:0;grid-row:1;min-width:0;font-weight:normal}
  th{font:10px/16px "Open Sans",sans-serif;color:#222}
  thead tr{height:18px;background:#eee;border-bottom:1px solid #000}
  thead th{display:flex;justify-content:center;border-right:1px solid #000}
  thead th:first-child{border-color:#888;margin-right:1px}
  thead th.sel,tbody th.sel{background:#a9d2fb} tbody th.sel{font-weight:bold}
  tbody th{background:#eee;border-bottom:1px solid #000;border-right:1px solid #777;margin-right:1px;display:flex;align-items:flex-end;justify-content:center;overflow:hidden}
  td{display:flex;align-items:center;white-space:nowrap;padding-left:2px}
  .end{justify-content:flex-end;padding-right:4px} .mid{justify-content:center}
  .big{font-size:14px;line-height:16px} .sm{font-size:11px} .xs{font-size:10px;line-height:15px} .two{line-height:18px}
  .bold{font-weight:bold} .title{font-weight:bold;font-size:16px;line-height:17px;justify-content:center;color:#000}
  .low{align-items:flex-end;padding-bottom:3px} .rise{padding-bottom:6px} .up{padding-bottom:2px} .top{align-items:flex-start;font-size:9px;line-height:8px;padding-left:6px}
  .note{font-size:12px;overflow:hidden} .pt{font-weight:bold;font-size:16px;justify-content:center;padding:0}
  sup{font-size:9px;line-height:0;vertical-align:5px} big{font-size:15px;line-height:14px}
  .b{border:1px dotted #222;border-right:0;justify-content:center;padding:0 3px 0 0;font:20px/20px "Liberation Mono","Courier New",monospace;color:#444}
  .b.last{border-right:1px dotted #222;margin-right:-1px} .b.soft,.b.soft.last{border-color:#999}
  .b.red{color:#f03434} .b.nm{font:18px/20px "DejaVu Serif",serif} .b.dash{font-size:24px}
  .tall{height:26px}
  .blk{background:#000} .over{position:relative;z-index:1;align-items:flex-start;padding:2px 0 0 3px}
  .edge{border-left:1px solid #999}
  .cur{border:2px solid #000;border-right-width:1px;padding:0;align-items:flex-end;justify-content:flex-end} .cur i{width:5px;height:5px;background:#000}
`, () => `<table aria-label="Лист"><thead><tr><th></th>${Array.from({ length: COLS }, (_, i) => `<th${i === 120 ? ' class="sel"' : ''}>${colName(i)}</th>`).join('')}</tr></thead><tbody>${HEIGHTS.map((h, i) => {
  const r = i + 1;
  return `<tr style="--h:${h}px"><th${r === 12 ? ' class="sel"' : ''}>${r}</th>${MARGIN_ROWS.includes(r) ? '<td class="edge" style="grid-column:120/span 2"></td>' : ''}${r === 12 ? '' : '<td class="edge" style="grid-column:122/span 1"></td>'}${CELLS[r] || ''}</tr>`;
}).join('')}</tbody></table>`);

define('sheet-area', `
  :host{display:grid;grid-template-columns:minmax(0,1fr) 15px 10px;grid-template-rows:minmax(0,1fr) 23px;background:#eee}
  sheet-grid{min-height:0}
  .v{grid-area:1/2/3/3;display:flex;flex-direction:column;border-right:1px solid #d8d8d8}
  .v button{height:15px;width:100%} .track{flex:1} .track div{height:192px;background:#c6c6c6}
  .v .s{border-top:1px solid #ccc}
  .side{grid-area:1/3/3/4;display:flex;flex-direction:column;align-items:center;padding-top:310px}
  .side button{width:8px;height:42px;border:1px solid #aaa;border-radius:3px;background:#fff}
  .tabs{display:flex;border-bottom:1px solid #ccc}
  .l{flex:0 0 849px;display:flex;border-top:1px solid #333;border-right:1px solid #bbb;margin-right:2px}
  .l button{width:23px;border-right:1px solid #bbb}
  .l button.t{width:47px;margin:-1px 0 1px 3px;background:#fff;border:1px solid #222;border-top:0;border-bottom-width:2px;font-weight:bold;color:#222}
  .l button.n{border:0;width:36px}
  .h{flex:1;display:flex;align-items:center;border:1px solid #bbb;border-bottom:0;border-right:0}
  .h button{width:19px;height:18px} .h .tr{flex:1} .h .tr div{width:51%;height:16px;background:#c6c6c6}
  .h button:last-child{width:24px}
`, `<sheet-grid></sheet-grid>
  <div class="v"><button aria-label="Вверх">${ic('vup')}</button><div class="track"><div></div></div><button aria-label="Вниз">${ic('vdn')}</button><button class="s" aria-label="Страница вверх">${ic('dup')}</button><button class="s" aria-label="Объект">${ic('dot')}</button><button class="s" aria-label="Страница вниз">${ic('ddn')}</button><button class="s" aria-label="Угол">${ic('cornr')}</button></div>
  <div class="side"><button aria-label="Боковая панель">${ic('side')}</button></div>
  <div class="tabs"><div class="l"><button aria-label="Первый">${ic('nfirst')}</button><button aria-label="Назад">${ic('nprev')}</button><button aria-label="Вперёд">${ic('nnext')}</button><button aria-label="Последний">${ic('nlast')}</button><button class="t">«стр.1»</button><button class="n" aria-label="Новый лист">${ic('newsh')}</button></div>
  <div class="h"><button aria-label="Влево">${ic('vlt')}</button><div class="tr"><div></div></div><button aria-label="Вправо">${ic('vrt')}</button></div></div>`);

define('status-bar', `
  :host{display:flex;align-items:center;height:29px;flex:none;background:#eee;padding:0 17px 2px 6px;position:relative;color:#222}
  .f{height:20px;background:#fff;border:1px solid #d9d9d9;display:flex;align-items:center;padding-left:3px;margin-right:5px}
  .g{flex:1} .p{width:170px} .e{width:148px}
  button.s{width:23px;margin-right:5px} button.w{width:42px;height:20px;background:#fff;border:1px solid #d9d9d9;margin-right:5px}
  .z{width:20px;font-size:15px;color:#777}
  input{appearance:none;width:118px;height:14px;background:linear-gradient(#d2d2d2,#d2d2d2) center/100% 1px no-repeat}
  input::-webkit-slider-thumb{appearance:none;width:11px;height:11px;border:1px solid #777;border-radius:50%;background:#fff}
  .pc{padding-left:12px;width:48px;position:relative;z-index:1} .m{width:10px;padding-bottom:6px;position:relative;z-index:1}
  .wm{position:absolute;right:12px;top:3px;font:13px/18px "Open Sans",sans-serif;color:#999}
`, `<div class="f g"></div><div class="f p">стр.1</div><div class="f e"></div><button class="s" aria-label="Обновить">${ic('sync')}</button><button class="w">Вст</button><button class="w">АВТО</button>
  <button class="z">−</button><input type="range" aria-label="Масштаб" min="0" max="200" value="98"><button class="z">+</button><span class="wm">winstart.ru</span><span class="pc">100%</span><button class="m">»</button>`);
</script>
</body>
</html>
